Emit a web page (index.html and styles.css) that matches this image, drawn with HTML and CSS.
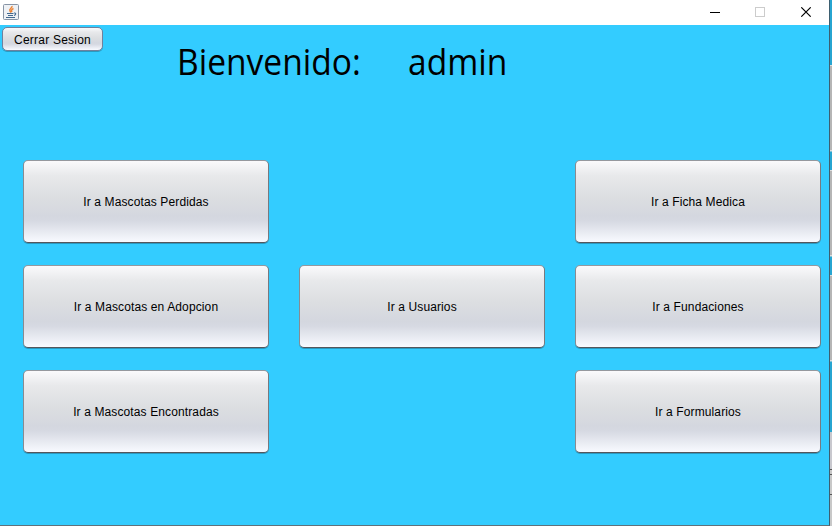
FILE: index.html
```html
<!DOCTYPE html>
<html lang="es">
<head>
<meta charset="utf-8">
<title>Bienvenido</title>
<link rel="stylesheet" href="styles.css">
</head>
<body>
<div class="window">
  <header class="titlebar">
    <svg class="java" width="16" height="16" viewBox="0 0 16 16">
      <rect x=".5" y=".5" width="15" height="15" rx="1" fill="#eef1f5" stroke="#8794a5"/>
      <path d="M9 2C9.500 4 5.500 5 7 7L8 8.500M10.500 4.500C8.500 5.500 8 6.500 9 8" fill="none" stroke="#ed8536" stroke-width="1.500"/>
      <path d="M4 9.500H10.500M5 11.500H10M3 13.500H12M11 9C13.500 8.500 13 11 11 11.500" fill="none" stroke="#42698f" stroke-width="1.100"/>
    </svg>
    <svg class="controls" width="102" height="10" viewBox="0 0 102 10" fill="none">
      <path d="M0 5.500H10" stroke="#000"/>
      <rect x="45.500" y=".5" width="9" height="9" stroke="#ccc"/>
      <path d="M91.300 .3L100.700 9.700M100.700 .3L91.300 9.700" stroke="#000" stroke-width="1.100"/>
    </svg>
  </header>
  <main class="content">
    <div class="top">
      <button class="btn logout">Cerrar Sesion</button>
      <h1 class="welcome"><span class="greeting">Bienvenido:</span><span class="user">admin</span></h1>
    </div>
    <nav class="menu">
      <button class="btn left">Ir a Mascotas Perdidas</button>
      <button class="btn right">Ir a Ficha Medica</button>
      <button class="btn left">Ir a Mascotas en Adopcion</button>
      <button class="btn middle">Ir a Usuarios</button>
      <button class="btn right">Ir a Fundaciones</button>
      <button class="btn left">Ir a Mascotas Encontradas</button>
      <button class="btn right">Ir a Formularios</button>
    </nav>
  </main>
</div>
<div class="backdrop"></div>
</body>
</html>
```
FILE: styles.css
```css
* { box-sizing: border-box; }
body {
  margin: 0;
  width: 832px;
  height: 526px;
  overflow: hidden;
  display: flex;
  font-family: "Liberation Sans", Arial, sans-serif;
}
.window {
  width: 830px;
  height: 526px;
  border-right: 1px solid #3d5f70;
  border-bottom: 1px solid #60717a;
  background: #33ccff;
}
.titlebar {
  height: 25px;
  padding: 0 17px 0 3px;
  display: flex;
  justify-content: space-between;
  align-items: center;
  background: #fff;
}
.java { margin-top: -1px; }
.controls { margin-top: -1px; }
.top { height: 135px; padding: 2px; display: flex; align-items: flex-start; }
.btn {
  padding: 0;
  border: 1px solid;
  border-color: #95989e #777a80 #53565c #888b91;
  border-radius: 5px;
  background: linear-gradient(#fafafc 0%, #e8e9eb 18%, #dcdee1 45%, #d4d7df 68%, #d6d9e2 74%, #f8faff 100%);
  color: #000;
  font: 12px "Liberation Sans", Arial, sans-serif;
  letter-spacing: .12px;
  box-shadow: 0 1px 0 rgba(30, 90, 115, .45);
}
.logout { width: 101px; height: 24px; padding-top: 2px; border-color: #71809c; letter-spacing: .22px; }
.welcome {
  margin: 10px 0 0 74px;
  display: flex;
  font: 400 36px/50px "Open Sans", "Noto Sans", sans-serif;
  color: #000;
}
.greeting { width: 231px; }
.greeting, .user { transform: scaleX(.932); transform-origin: left; }
.menu {
  padding-left: 23px;
  display: grid;
  grid-template-columns: repeat(3, 246px);
  grid-auto-rows: 83px;
  gap: 22px 30px;
}
.left { grid-column: 1; }
.middle { grid-column: 2; }
.right { grid-column: 3; }
.backdrop {
  width: 2px;
  height: 526px;
  background: linear-gradient(
    #27a5d1 0 65px, #ddd 65px 66px, #b5b5b5 66px 150px, #ddd 150px 151px,
    #27a5d1 152px 170px, #ddd 170px 171px, #b5b5b5 171px 255px, #ddd 255px 256px,
    #27a5d1 257px 275px, #ddd 275px 276px, #b5b5b5 276px 360px, #ddd 360px 361px,
    #27a5d1 362px 432px, #c8c8ce 432px 469px, #555 469px 470px, #c8c8c8 470px 474px,
    #555 474px 475px, #c8c8c8 475px 494px, #555 494px 495px, #c8c8c8 495px);
}
```
